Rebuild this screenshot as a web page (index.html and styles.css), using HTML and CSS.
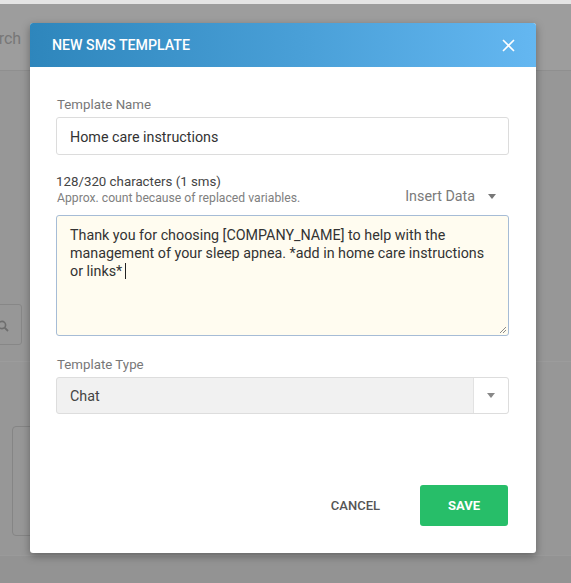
FILE: index.html
```html
<!DOCTYPE html>
<html lang="en">
<head>
<meta charset="utf-8">
<title>New SMS Template</title>
<link rel="stylesheet" href="styles.css">
</head>
<body>
<div class="page">
  <div class="topstrip"></div>
  <div class="appbar">
    <span class="search-text">Search</span>
  </div>
  <div class="content">
    <div class="searchbox">
      <svg class="search-icon" width="14" height="14" viewBox="0 0 14 14"><circle cx="5" cy="5" r="3.6" fill="none" stroke="#6e6e6e" stroke-width="1.6"/><line x1="7.6" y1="7.6" x2="11" y2="11" stroke="#6e6e6e" stroke-width="1.8"/></svg>
    </div>
    <div class="lower">
      <div class="card"></div>
    </div>
  </div>
  <div class="bottom"></div>
</div>

<div class="modal">
  <div class="modal-header">
    <span class="modal-title">NEW SMS TEMPLATE</span>
    <svg class="close" width="13" height="13" viewBox="0 0 13 13"><path d="M1 1L12 12M12 1L1 12" stroke="#fff" stroke-width="1.6" fill="none"/></svg>
  </div>
  <div class="modal-body">
    <label class="label">Template Name</label>
    <div class="input">Home care instructions</div>

    <div class="count-row">
      <div class="count">
        <div class="count-main">128/320 characters (1 sms)</div>
        <div class="count-sub">Approx. count because of replaced variables.</div>
      </div>
      <div class="insert">Insert Data <span class="caret"></span></div>
    </div>

    <div class="textarea">Thank you for choosing [COMPANY_NAME] to help with the management of your sleep apnea. *add in home care instructions or links*<span class="text-caret"></span>
      <svg class="grip" width="9" height="9" viewBox="0 0 9 9"><path d="M8 2L2 8M8 5L5 8" stroke="#8a8a8a" stroke-width="1" fill="none"/></svg>
    </div>

    <label class="label label-type">Template Type</label>
    <div class="select">
      <span class="select-value">Chat</span>
      <span class="select-btn"><span class="caret caret-small"></span></span>
    </div>

    <div class="footer">
      <button class="btn-cancel">CANCEL</button>
      <button class="btn-save">SAVE</button>
    </div>
  </div>
</div>
</body>
</html>
```
FILE: styles.css
```css
* { box-sizing: border-box; }
html, body { margin: 0; padding: 0; }
body {
  width: 571px;
  height: 583px;
  overflow: hidden;
  font-family: Roboto, "Liberation Sans", Arial, sans-serif;
  background: #979797;
  position: relative;
}

.page {
  display: flex;
  flex-direction: column;
  height: 583px;
}
.topstrip { height: 4px; background: #e4e4e4; }
.appbar {
  height: 67px;
  background: #9d9d9d;
  border-bottom: 1px solid #8f8f8f;
  display: flex;
  align-items: center;
  padding-top: 3px;
}
.search-text {
  margin-left: -28px;
  font-size: 16px;
  color: #777;
}
.content {
  flex: 1;
  background: #979797;
  display: flex;
  flex-direction: column;
}
.searchbox {
  margin-top: 233px;
  margin-left: -20px;
  width: 42px;
  height: 41px;
  border: 1px solid #878787;
  border-radius: 3px;
  display: flex;
  align-items: center;
  padding-left: 16px;
  padding-top: 4px;
}
.lower {
  margin-top: 16px;
  border-top: 1px solid #9c9c9c;
  flex: 1;
  padding-top: 64px;
  padding-left: 12px;
}
.card {
  width: 60px;
  height: 110px;
  border: 1px solid #858585;
  border-radius: 4px;
}
.bottom {
  height: 28px;
  background: #939393;
  border-top: 1px solid #9a9a9a;
}

/* modal overlays the page */
.modal {
  position: absolute;
  left: 30px;
  top: 23px;
  width: 506px;
  height: 530px;
  background: #fff;
  border-radius: 3px;
  box-shadow: 0 3px 8px rgba(0,0,0,0.35);
  display: flex;
  flex-direction: column;
  overflow: hidden;
}
.modal-header {
  height: 44px;
  flex: none;
  background: linear-gradient(90deg, #2e86bc 0%, #4aa0d8 55%, #64b7f1 100%);
  display: flex;
  align-items: center;
  justify-content: space-between;
  padding: 0 22px 0 22px;
}
.modal-title {
  color: #fff;
  font-size: 14.2px;
  font-weight: 500;
}
.close { display: block; margin-right: -1px; }

.modal-body {
  flex: 1;
  display: flex;
  flex-direction: column;
  padding: 30px 27px 27px 26px;
}
.label {
  display: block;
  font-size: 13.3px;
  line-height: 16px;
  color: #777;
  padding-left: 1px;
}
.input {
  margin-top: 4px;
  height: 38px;
  border: 1px solid #dcdcdc;
  border-radius: 3px;
  padding: 1px 13px 0;
  display: flex;
  align-items: center;
  font-size: 14.3px;
  color: #333;
}

.count-row {
  margin-top: 19px;
  display: flex;
  justify-content: space-between;
  align-items: flex-end;
}
.count-main {
  font-size: 13.3px;
  line-height: 16px;
  color: #444;
}
.count-sub {
  font-size: 12.2px;
  line-height: 16px;
  color: #808080;
  padding-left: 1px;
}
.insert {
  font-size: 14.3px;
  color: #7a7a7a;
  line-height: 16px;
  padding-right: 13px;
  padding-bottom: 2px;
  display: flex;
  align-items: center;
}
.caret {
  display: inline-block;
  width: 0;
  height: 0;
  border-left: 4.5px solid transparent;
  border-right: 4.5px solid transparent;
  border-top: 5px solid #777;
  margin-left: 13px;
}

.textarea {
  position: relative;
  margin-top: 9px;
  height: 121px;
  border: 1px solid #a6bcd6;
  border-radius: 3px;
  background: #fffcf0;
  padding: 10px 13px;
  font-size: 14.3px;
  line-height: 18px;
  color: #333;
}
.text-caret {
  display: inline-block;
  width: 1px;
  height: 16px;
  background: #222;
  margin-left: 3px;
  vertical-align: -3px;
}
.grip {
  position: absolute;
  right: 1px;
  bottom: 1px;
}

.label-type { margin-top: 21px; }
.select {
  margin-top: 4px;
  height: 37px;
  border: 1px solid #dddddd;
  border-radius: 3px;
  background: #f1f1f1;
  display: flex;
  align-items: stretch;
}
.select-value {
  flex: 1;
  display: flex;
  align-items: center;
  padding: 1px 0 0 13px;
  font-size: 14.3px;
  color: #444;
}
.select-btn {
  width: 35px;
  background: #fff;
  border-left: 1px solid #e2e2e2;
  border-radius: 0 3px 3px 0;
  display: flex;
  align-items: center;
  justify-content: center;
}
.caret-small {
  margin-left: 0;
  border-left-width: 4px;
  border-right-width: 4px;
  border-top: 5px solid #888;
}

.footer {
  margin-top: auto;
  display: flex;
  justify-content: flex-end;
  align-items: center;
}
.btn-cancel {
  background: none;
  border: none;
  font-family: inherit;
  font-size: 13px;
  font-weight: 500;
  color: #555;
  padding: 0;
  margin-right: 40px;
}
.btn-save {
  width: 88px;
  height: 41px;
  border: none;
  border-radius: 3px;
  background: #27be69;
  color: #fff;
  font-family: inherit;
  font-size: 13px;
  font-weight: 700;
  margin-right: 1px;
}
```
